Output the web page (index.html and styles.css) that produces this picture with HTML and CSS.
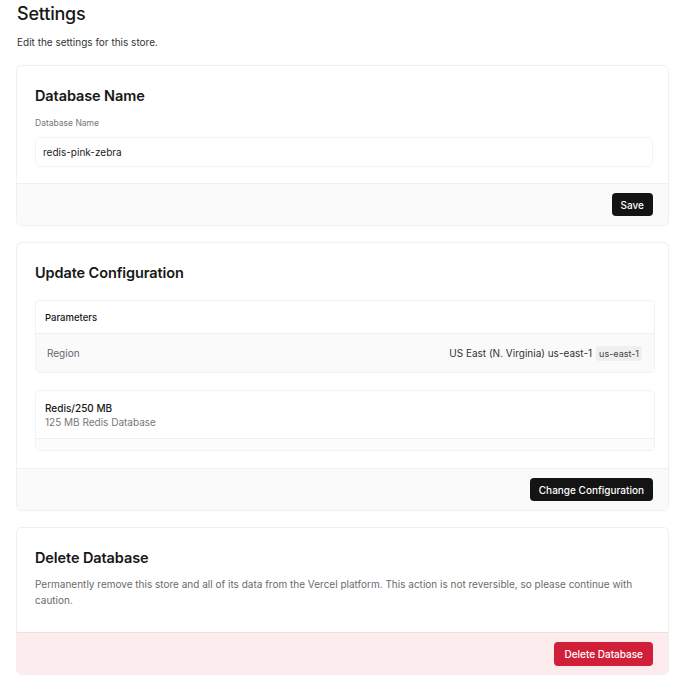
FILE: index.html
```html
<!DOCTYPE html>
<html lang="en">
<head>
<meta charset="utf-8">
<title>Settings</title>
<link rel="stylesheet" href="styles.css">
</head>
<body>
<main class="page">
  <header class="page-head">
    <h1 class="page-title">Settings</h1>
    <p class="page-sub">Edit the settings for this store.</p>
  </header>

  <section class="card">
    <div class="card-body">
      <h2 class="card-title">Database Name</h2>
      <label class="field-label" for="dbname">Database Name</label>
      <div class="input" id="dbname">redis-pink-zebra</div>
    </div>
    <div class="card-foot">
      <button class="btn btn-dark">Save</button>
    </div>
  </section>

  <section class="card">
    <div class="card-body config-body">
      <h2 class="card-title">Update Configuration</h2>
      <div class="params">
        <div class="params-head">Parameters</div>
        <div class="params-row">
          <span class="params-key">Region</span>
          <span class="params-val">US East (N. Virginia) us-east-1 <span class="tag">us-east-1</span></span>
        </div>
      </div>
      <div class="plan">
        <div class="plan-main">
          <div class="plan-name">Redis/250 MB</div>
          <div class="plan-desc">125 MB Redis Database</div>
        </div>
        <div class="plan-strip"></div>
      </div>
    </div>
    <div class="card-foot">
      <button class="btn btn-dark">Change Configuration</button>
    </div>
  </section>

  <section class="card">
    <div class="card-body danger-body">
      <h2 class="card-title">Delete Database</h2>
      <p class="card-text">Permanently remove this store and all of its data from the Vercel platform. This action is not reversible, so please continue with caution.</p>
    </div>
    <div class="card-foot danger-foot">
      <button class="btn btn-red">Delete Database</button>
    </div>
  </section>
</main>
</body>
</html>
```

FILE: styles.css
```css
* { box-sizing: border-box; }
html, body { margin: 0; padding: 0; background: #ffffff; }
body {
  font-family: Inter, "Noto Sans", "Liberation Sans", sans-serif;
  color: #171717;
  -webkit-font-smoothing: antialiased;
}
.page {
  width: 653px;
  margin-left: 16px;
  padding-top: 2px;
  display: flex;
  flex-direction: column;
}
.page-head { padding-left: 1px; margin-bottom: 17px; }
.page-title {
  margin: 0;
  font-size: 18px;
  line-height: 24px;
  font-weight: 500;
  letter-spacing: -0.2px;
}
.page-sub {
  margin: 10px 0 0;
  font-size: 10px;
  line-height: 12px;
  color: #333;
}
.card {
  border: 1px solid #f0f0f0;
  border-radius: 6px;
  background: #fff;
  box-shadow: 0 0 2px rgba(0,0,0,0.03);
  margin-bottom: 16px;
  overflow: hidden;
}
.card-body {
  padding: 20px 15px 16px 18px;
  display: flex;
  flex-direction: column;
}
.card-title {
  margin: 0;
  font-size: 14.5px;
  line-height: 20px;
  font-weight: 600;
  letter-spacing: -0.1px;
}
.field-label {
  margin-top: 11px;
  font-size: 8.5px;
  line-height: 12px;
  color: #777;
}
.input {
  margin-top: 8px;
  height: 30px;
  border: 1px solid #f2f2f2;
  border-radius: 5px;
  padding: 0 7px;
  display: flex;
  align-items: center;
  font-size: 10px;
  color: #1a1a1a;
}
.card-foot {
  background: #fafafa;
  border-top: 1px solid #f0f0f0;
  height: 42px;
  display: flex;
  align-items: center;
  justify-content: flex-end;
  padding-right: 15px;
}
.btn {
  font-family: inherit;
  border: 0;
  border-radius: 4px;
  height: 23px;
  padding: 0 9px;
  font-size: 10px;
  font-weight: 500;
  color: #fff;
  cursor: pointer;
}
.btn-dark { background: #141414; }
.btn-red { background: #d11f39; height: 24px; padding: 0 10px; }

.config-body { padding-bottom: 17px; }
.params {
  margin-top: 17px;
  border: 1px solid #f2f2f2;
  border-radius: 4px;
  margin-right: -2px;
}
.params-head {
  height: 33px;
  display: flex;
  align-items: center;
  padding-left: 9px;
  font-size: 9.5px;
  font-weight: 500;
  border-bottom: 1px solid #f0f0f0;
}
.params-row {
  height: 38px;
  display: flex;
  align-items: center;
  justify-content: space-between;
  padding: 0 12px 0 11px;
  background: #fafafa;
  font-size: 10px;
}
.params-key { color: #666; }
.params-val { color: #333; display: flex; align-items: center; gap: 4px; }
.tag {
  background: #efefef;
  border-radius: 3px;
  padding: 2px 3px;
  font-size: 9px;
  color: #444;
}
.plan {
  margin-top: 17px;
  border: 1px solid #f2f2f2;
  border-radius: 4px;
  margin-right: -2px;
}
.plan-main {
  height: 48px;
  padding: 8px 9px;
  display: flex;
  flex-direction: column;
  justify-content: center;
  border-bottom: 1px solid #f0f0f0;
}
.plan-name { font-size: 10px; font-weight: 500; line-height: 14px; }
.plan-desc { font-size: 10px; color: #777; line-height: 14px; }
.plan-strip { height: 11px; background: #fcfcfc; }

.danger-body { padding-top: 20px; padding-bottom: 24px; }
.card-text {
  margin: 8px 0 0;
  font-size: 10px;
  line-height: 16px;
  color: #6b6b6b;
}
.danger-foot {
  background: #fdecee;
  border-top: 1px solid #f8d9dd;
}
```
